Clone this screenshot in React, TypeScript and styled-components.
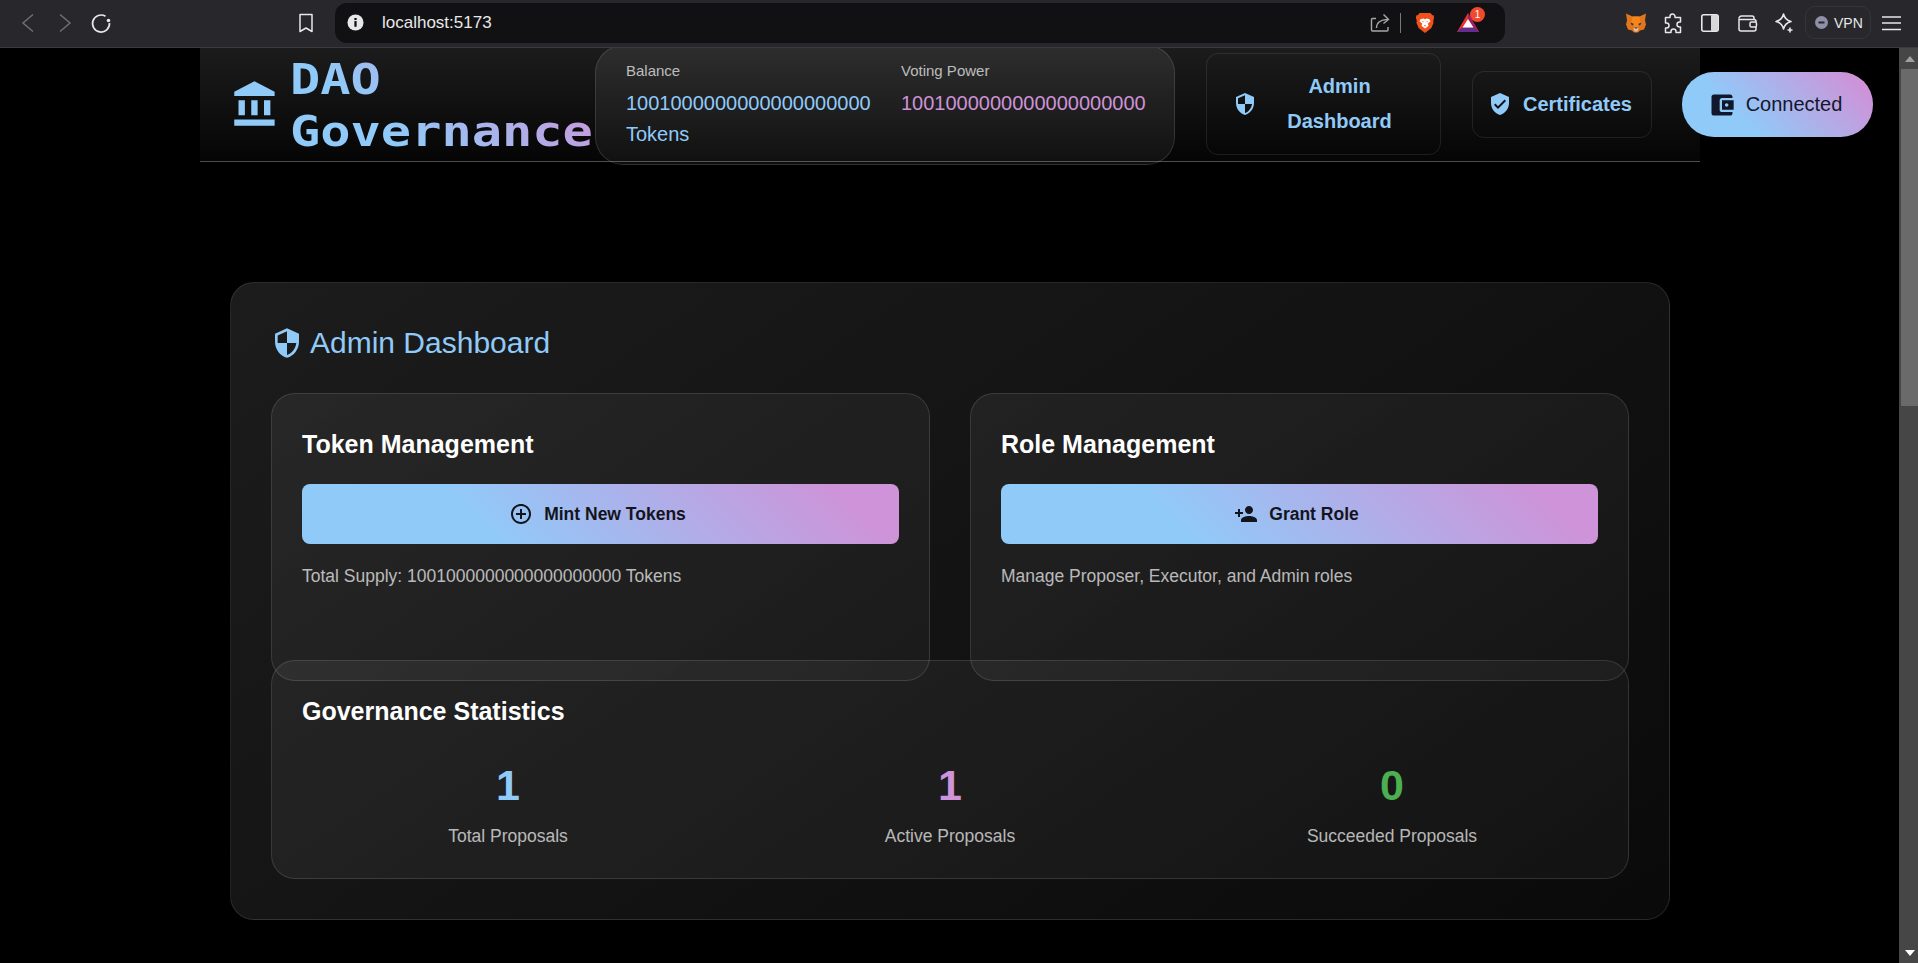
import React from 'react'
import styled, { createGlobalStyle } from 'styled-components'

const GlobalStyle = createGlobalStyle`
  html, body {
    margin: 0;
    padding: 0;
    height: 100%;
    overflow: hidden;
    background: #000;
  }
  body {
    font-family: "Liberation Sans", Arial, sans-serif;
    color: #fff;
  }
  * { box-sizing: border-box; }
`

const accentGradient = 'linear-gradient(45deg, #90caf9 30%, #ce93d8 90%)'
const supply = '1001000000000000000000'

const Window = styled.div`
  width: 1918px;
  height: 963px;
  display: flex;
  flex-direction: column;
  overflow: hidden;
`

const BrowserBar = styled.div`
  position: relative;
  z-index: 2;
  flex: 0 0 48px;
  display: flex;
  align-items: center;
  background: #27272c;
  border-bottom: 1px solid #3a3a40;
  padding: 0 14px 2px 16px;
`

const NavGroup = styled.div`
  flex-shrink: 0;
  display: flex;
  align-items: center;
  gap: 14px;
  width: 319px;
  padding-right: 18px;
`

const BarIcon = styled.svg`
  display: block;
  flex-shrink: 0;
`

const ReloadIcon = styled(BarIcon)`
  margin-left: 2px;
`

const BookmarkIcon = styled(BarIcon)`
  margin-left: auto;
`

const AddressBar = styled.div`
  flex-shrink: 0;
  width: 1170px;
  height: 40px;
  display: flex;
  align-items: center;
  background: #111113;
  border-radius: 12px;
  padding: 0 26px 0 12px;
`

const UrlText = styled.span`
  margin-left: 18px;
  font-size: 17px;
  color: #e8e8ea;
  flex: 1;
`

const Divider = styled.span`
  width: 1px;
  height: 20px;
  background: #77777c;
  margin: 0 14px 0 10px;
`

const BatWrap = styled.span`
  position: relative;
  display: block;
  margin-left: 22px;
`

const BatBadge = styled.span`
  position: absolute;
  top: -6px;
  right: -6px;
  width: 15px;
  height: 15px;
  border-radius: 50%;
  background: #f0492d;
  color: #fff;
  font-size: 10px;
  line-height: 15px;
  text-align: center;
`

const ExtGroup = styled.div`
  flex-shrink: 0;
  display: flex;
  align-items: center;
  gap: 15px;
  margin-left: 120px;
`

const VpnChip = styled.div`
  display: flex;
  align-items: center;
  gap: 6px;
  width: 66px;
  height: 33px;
  padding-left: 9px;
  margin: 0 -5px 0 -5px;
  border: 1px solid #34343a;
  border-radius: 10px;
  font-size: 14px;
  color: #e8e8ea;
`

const Viewport = styled.div`
  flex: 1;
  display: flex;
  min-height: 0;
`

const Page = styled.div`
  flex: 1;
  min-width: 0;
  background: #000;
  padding: 0 199px 0 200px;
`

const Scrollbar = styled.div`
  flex: 0 0 19px;
  display: flex;
  flex-direction: column;
  align-items: flex-end;
  background: #464646;
`

const ScrollArrow = styled.div<{ $down?: boolean }>`
  flex: 0 0 21px;
  width: 17px;
  display: flex;
  align-items: center;
  justify-content: center;
  &::before {
    content: '';
    border-left: 5px solid transparent;
    border-right: 5px solid transparent;
    ${({ $down }) => ($down ? 'border-top: 6px solid #fff;' : 'border-bottom: 6px solid #a0a0a0;')}
  }
`

const ScrollThumb = styled.div`
  flex: 0 0 337px;
  width: 17px;
  background: #6a6a6a;
`

const ScrollTrack = styled.div`
  flex: 1;
`

const Header = styled.header`
  height: 114px;
  display: flex;
  align-items: center;
  padding-left: 30px;
  background: linear-gradient(180deg, #1c1c1c 0%, #050505 100%);
  border-bottom: 1px solid rgba(255, 255, 255, 0.22);
`

const Logo = styled.div`
  flex-shrink: 0;
  display: flex;
  align-items: center;
  gap: 9px;
  width: 365px;
`

const LogoText = styled.div`
  flex-shrink: 0;
  width: 260px;
  font-family: "DejaVu Sans Mono", monospace;
  font-size: 43px;
  font-weight: 700;
  line-height: 52px;
  transform: scaleX(1.17);
  transform-origin: left center;
  background: ${accentGradient};
  -webkit-background-clip: text;
  background-clip: text;
  color: transparent;
`

const StatsPill = styled.div`
  flex-shrink: 0;
  width: 580px;
  height: 120px;
  display: flex;
  gap: 30px;
  padding: 13px 30px;
  border: 1px solid rgba(255, 255, 255, 0.12);
  border-radius: 28px;
  background: linear-gradient(180deg, rgba(255, 255, 255, 0.08), rgba(255, 255, 255, 0.05));
`

const StatColumn = styled.div`
  width: 245px;
  flex-shrink: 0;
`

const StatLabel = styled.div`
  font-size: 15px;
  line-height: 24px;
  margin-bottom: 5px;
  color: rgba(255, 255, 255, 0.7);
`

const StatValue = styled.div<{ $color: string }>`
  font-size: 20px;
  line-height: 31px;
  color: ${({ $color }) => $color};
`

const NavButton = styled.button`
  flex-shrink: 0;
  margin: 0 0 1px 31px;
  display: flex;
  align-items: center;
  background: transparent;
  border: 1px solid rgba(255, 255, 255, 0.09);
  border-radius: 12px;
  font-family: inherit;
  font-size: 20px;
  font-weight: 700;
  line-height: 35px;
  color: #90caf9;
`

const AdminButton = styled(NavButton)`
  width: 235px;
  gap: 8px;
  padding: 15px 26px;
`

const CertificatesButton = styled(NavButton)`
  width: 180px;
  gap: 11px;
  padding: 15px 0 15px 15px;
`

const AdminLabel = styled.span`
  flex: 1;
  text-align: center;
`

const ConnectButton = styled.button`
  flex-shrink: 0;
  width: 191px;
  height: 65px;
  margin-left: 30px;
  padding: 0 5px 0 0;
  display: flex;
  align-items: center;
  justify-content: center;
  gap: 10px;
  border: 0;
  border-radius: 32px;
  background: ${accentGradient};
  font-family: inherit;
  font-size: 20px;
  color: #12182b;
`

const Dashboard = styled.main`
  margin: 120px 30px 0;
  padding: 40px;
  border: 1px solid rgba(255, 255, 255, 0.1);
  border-radius: 24px;
  background: linear-gradient(145deg, #1c1c1c, #0a0a0a);
`

const DashboardTitle = styled.h1`
  margin: 0 0 30px;
  display: flex;
  align-items: center;
  gap: 7px;
  height: 40px;
  font-size: 30px;
  font-weight: 400;
  color: #90caf9;
`

const CardGrid = styled.div`
  display: grid;
  grid-template-columns: 1fr 1fr;
  gap: 40px;
`

const Card = styled.section`
  border: 1px solid rgba(255, 255, 255, 0.12);
  border-radius: 24px;
  padding: 32px 30px 30px;
  background: linear-gradient(145deg, rgba(255, 255, 255, 0.06), rgba(255, 255, 255, 0.035));
`

const ManageCard = styled(Card)`
  height: 288px;
`

const StatsCard = styled(Card)`
  position: relative;
  height: 219px;
  margin-top: -21px;
`

const CardTitle = styled.h2`
  margin: 0;
  font-size: 25px;
  line-height: 36px;
  font-weight: 700;
  color: #fff;
`

const ActionButton = styled.button`
  width: 100%;
  height: 60px;
  margin-top: 22px;
  padding: 0 6px 0 0;
  display: flex;
  align-items: center;
  justify-content: center;
  gap: 11px;
  border: 0;
  border-radius: 8px;
  background: ${accentGradient};
  font-family: inherit;
  font-size: 17.5px;
  font-weight: 700;
  color: #14141c;
`

const CardNote = styled.p`
  margin: 16px 0 0;
  font-size: 17.5px;
  line-height: 32px;
  color: rgba(255, 255, 255, 0.7);
`

const StatsGrid = styled.div`
  display: grid;
  grid-template-columns: repeat(3, 1fr);
  gap: 30px;
  margin-top: 30px;
`

const StatBlock = styled.div`
  text-align: center;
`

const StatNumber = styled.div<{ $color: string }>`
  font-size: 43px;
  line-height: 52px;
  font-weight: 700;
  color: ${({ $color }) => $color};
`

const StatCaption = styled.div`
  margin-top: 9px;
  font-size: 17.5px;
  line-height: 32px;
  color: rgba(255, 255, 255, 0.7);
`

const MaterialIcon = ({ d, size, color = 'currentColor' }: { d: string; size: number; color?: string }) => (
  <BarIcon width={size} height={size} viewBox="0 0 24 24" fill={color}>
    <path d={d} />
  </BarIcon>
)

const icons = {
  bank: 'M4 10v7h3v-7H4zm6 0v7h3v-7h-3zM2 22h19v-3H2v3zm14-12v7h3v-7h-3zm-4.5-9L2 6v2h19V6l-9.5-5z',
  security:
    'M12 1L3 5v6c0 5.55 3.84 10.74 9 12 5.16-1.26 9-6.45 9-12V5l-9-4zm0 10.99h7c-.53 4.12-3.28 7.79-7 8.94V12H5V6.3l7-3.11v8.8z',
  verified:
    'M12 1L3 5v6c0 5.55 3.84 10.74 9 12 5.16-1.26 9-6.45 9-12V5l-9-4zm-2 16l-4-4 1.41-1.41L10 14.17l6.59-6.59L18 9l-8 8z',
  wallet:
    'M21 18v1c0 1.1-.9 2-2 2H5c-1.11 0-2-.9-2-2V5c0-1.1.89-2 2-2h14c1.1 0 2 .9 2 2v1h-9c-1.11 0-2 .9-2 2v8c0 1.1.89 2 2 2h9zm-9-2h10V8H12v8zm4-2.5c-.83 0-1.5-.67-1.5-1.5s.67-1.5 1.5-1.5 1.5.67 1.5 1.5-.67 1.5-1.5 1.5z',
  addCircle:
    'M13 7h-2v4H7v2h4v4h2v-4h4v-2h-4V7zm-1-5C6.48 2 2 6.48 2 12s4.48 10 10 10 10-4.48 10-10S17.52 2 12 2zm0 18c-4.41 0-8-3.59-8-8s3.59-8 8-8 8 3.59 8 8-3.59 8-8 8z',
  personAdd:
    'M15 12c2.21 0 4-1.79 4-4s-1.79-4-4-4-4 1.79-4 4 1.79 4 4 4zm-9-2V7H4v3H1v2h3v3h2v-3h3v-2H6zm9 4c-2.67 0-8 1.34-8 4v2h16v-2c0-2.66-5.33-4-8-4z',
}

const BrowserChrome = () => (
  <BrowserBar>
    <NavGroup>
      <BarIcon width="22" height="22" viewBox="0 0 22 22" fill="none" stroke="#6f6f74" strokeWidth="1.5">
        <path d="M17 2.5L7 11l10 8.5" />
      </BarIcon>
      <BarIcon width="22" height="22" viewBox="0 0 22 22" fill="none" stroke="#6f6f74" strokeWidth="1.5">
        <path d="M8 2.5L18 11 8 19.5" />
      </BarIcon>
      <ReloadIcon width="22" height="22" viewBox="0 0 22 22" fill="none" stroke="#e8e8ea" strokeWidth="1.7">
        <path d="M15.5 4.3A8.5 8.5 0 1 0 19.5 11" />
        <circle cx="18.5" cy="8.5" r="1.8" fill="#e8e8ea" stroke="none" />
      </ReloadIcon>
      <BookmarkIcon width="22" height="22" viewBox="0 0 22 22" fill="none" stroke="#e8e8ea" strokeWidth="1.5" strokeLinejoin="round">
        <path d="M5 2.5h12v17l-6-3.5-6 3.5z" />
      </BookmarkIcon>
    </NavGroup>
    <AddressBar>
      <BarIcon width="17" height="17" viewBox="0 0 18 18">
        <circle cx="9" cy="9" r="8.5" fill="#e8e8ea" />
        <rect x="7.8" y="7.5" width="2.4" height="6" fill="#111113" />
        <rect x="7.8" y="4.2" width="2.4" height="2.2" fill="#111113" />
      </BarIcon>
      <UrlText>localhost:5173</UrlText>
      <BarIcon width="20" height="20" viewBox="0 0 20 20" fill="none" stroke="#a8a8ac" strokeWidth="1.4">
        <path d="M6 5.5H2.5a1 1 0 0 0-1 1V17a1 1 0 0 0 1 1H17a1 1 0 0 0 1-1v-3" />
        <path d="M6.5 15c0-5 4-8.5 11-8.5" />
        <path d="M13.5 1.5l5 5-5 4" />
      </BarIcon>
      <Divider />
      <BarIcon width="20" height="21" viewBox="0 0 22 23">
        <path d="M5 1h12l2 2.5h1.5L21 6l-1 4 .5 1.5-2.5 6L11 23l-7-5.5L1.5 11.5 2 10 1 6l.5-2.5H3z" fill="#f1511b" />
        <path d="M6 8l3-1 2 1 2-1 3 1 1 2-3 3 1 2-4 3-4-3 1-2-3-3z" fill="#fff" />
        <path d="M7.5 10l2 .5-.5 1zm7 0l-2 .5.5 1zM9.500 14.500h3L11 16z" fill="#f1511b" />
      </BarIcon>
      <BatWrap>
        <BarIcon width="22" height="19" viewBox="0 0 22 19">
          <path d="M11 0l11 19H0z" fill="#e8322f" />
          <path d="M11 0l11 19h-5.5L11 6z" fill="#9e1f63" />
          <path d="M0 19l5-4.5h12l5 4.5z" fill="#662d91" />
          <path d="M11 6l5.5 8.5h-11z" fill="#fff" />
        </BarIcon>
        <BatBadge>1</BatBadge>
      </BatWrap>
    </AddressBar>
    <ExtGroup>
      <BarIcon width="22" height="22" viewBox="0 0 22 22">
        <path d="M1 1.5l6.5 3h7l6.5-3-1 7 1 4-2 5-4 1-2 2H9l-2-2-4-1-2-5 1-4z" fill="#e2761b" />
        <path d="M7.5 4.5h7l1 6-3 5h-3l-3-5z" fill="#f6851b" />
        <path d="M5.5 10.5l3.5 1.5-2 1.5zm11 0L13 12l2 1.5z" fill="#233447" />
        <path d="M8.5 16h5l-1 3.5h-3z" fill="#d7c1b3" />
        <path d="M9.5 15.5h3L11 17z" fill="#233447" />
      </BarIcon>
      <BarIcon width="22" height="22" viewBox="0 0 22 22" fill="none" stroke="#e8e8ea" strokeWidth="1.5" strokeLinejoin="round">
        <path d="M8 4.5a2.5 2.5 0 0 1 5 0v1h5.5V10h-1a2.5 2.5 0 0 0 0 5h1v5.5H14v-1a2.5 2.5 0 0 0-5 0v1H3.500V16h1a2.5 2.5 0 0 0 0-5h-1V5.5H8z" />
      </BarIcon>
      <BarIcon width="22" height="22" viewBox="0 0 22 22">
        <rect x="2.8" y="2.8" width="16.4" height="16.4" rx="2" fill="none" stroke="#e8e8ea" strokeWidth="1.6" />
        <rect x="12" y="3" width="7" height="16" rx="1" fill="#d8d8da" />
      </BarIcon>
      <BarIcon width="22" height="22" viewBox="0 0 22 22" fill="none" stroke="#e8e8ea" strokeWidth="1.5">
        <path d="M3 6.5A2.5 2.5 0 0 1 5.5 4H16a2 2 0 0 1 2 2v1.5" />
        <path d="M3 6.5V17a2 2 0 0 0 2 2h13a2 2 0 0 0 2-2v-2M3 6.5a1 1 0 0 0 1 1h14a2 2 0 0 1 2 2V10" />
        <rect x="14" y="10" width="6.5" height="5" rx="1.5" />
      </BarIcon>
      <BarIcon width="22" height="22" viewBox="0 0 22 22" fill="none" stroke="#e8e8ea" strokeWidth="1.6" strokeLinejoin="round">
        <path d="M10.5 2c1 4.2 2.8 6.3 7.5 7.5-4.7 1.2-6.500 3.300-7.500 7.500-1-4.200-2.800-6.300-7.500-7.500 4.700-1.200 6.500-3.300 7.500-7.500z" />
        <path d="M17 15.5v5M14.5 18h5" />
      </BarIcon>
      <VpnChip>
        <BarIcon width="13" height="13" viewBox="0 0 13 13">
          <circle cx="6.5" cy="6.5" r="6.5" fill="#8f90a8" />
          <rect x="3.5" y="5.5" width="6" height="2" fill="#27272c" />
        </BarIcon>
        VPN
      </VpnChip>
      <BarIcon width="22" height="22" viewBox="0 0 22 22" stroke="#e8e8ea" strokeWidth="1.6">
        <path d="M1 5h19M1 11h19M1 17.5h19" />
      </BarIcon>
    </ExtGroup>
  </BrowserBar>
)

export default function App() {
  return (
    <Window>
      <GlobalStyle />
      <BrowserChrome />
      <Viewport>
        <Page>
          <Header>
            <Logo>
              <MaterialIcon d={icons.bank} size={51} color="#90caf9" />
              <LogoText>DAO Governance</LogoText>
            </Logo>
            <StatsPill>
              <StatColumn>
                <StatLabel>Balance</StatLabel>
                <StatValue $color="#90caf9">{supply} Tokens</StatValue>
              </StatColumn>
              <StatColumn>
                <StatLabel>Voting Power</StatLabel>
                <StatValue $color="#ce93d8">{supply}</StatValue>
              </StatColumn>
            </StatsPill>
            <AdminButton>
              <MaterialIcon d={icons.security} size={24} />
              <AdminLabel>Admin Dashboard</AdminLabel>
            </AdminButton>
            <CertificatesButton>
              <MaterialIcon d={icons.verified} size={24} />
              Certificates
            </CertificatesButton>
            <ConnectButton>
              <MaterialIcon d={icons.wallet} size={28} />
              Connected
            </ConnectButton>
          </Header>
          <Dashboard>
            <DashboardTitle>
              <MaterialIcon d={icons.security} size={32} />
              Admin Dashboard
            </DashboardTitle>
            <CardGrid>
              <ManageCard>
                <CardTitle>Token Management</CardTitle>
                <ActionButton>
                  <MaterialIcon d={icons.addCircle} size={24} />
                  Mint New Tokens
                </ActionButton>
                <CardNote>Total Supply: {supply} Tokens</CardNote>
              </ManageCard>
              <ManageCard>
                <CardTitle>Role Management</CardTitle>
                <ActionButton>
                  <MaterialIcon d={icons.personAdd} size={24} />
                  Grant Role
                </ActionButton>
                <CardNote>Manage Proposer, Executor, and Admin roles</CardNote>
              </ManageCard>
            </CardGrid>
            <StatsCard>
              <CardTitle>Governance Statistics</CardTitle>
              <StatsGrid>
                <StatBlock>
                  <StatNumber $color="#90caf9">1</StatNumber>
                  <StatCaption>Total Proposals</StatCaption>
                </StatBlock>
                <StatBlock>
                  <StatNumber $color="#ce93d8">1</StatNumber>
                  <StatCaption>Active Proposals</StatCaption>
                </StatBlock>
                <StatBlock>
                  <StatNumber $color="#4caf50">0</StatNumber>
                  <StatCaption>Succeeded Proposals</StatCaption>
                </StatBlock>
              </StatsGrid>
            </StatsCard>
          </Dashboard>
        </Page>
        <Scrollbar>
          <ScrollArrow />
          <ScrollThumb />
          <ScrollTrack />
          <ScrollArrow $down />
        </Scrollbar>
      </Viewport>
    </Window>
  )
}
